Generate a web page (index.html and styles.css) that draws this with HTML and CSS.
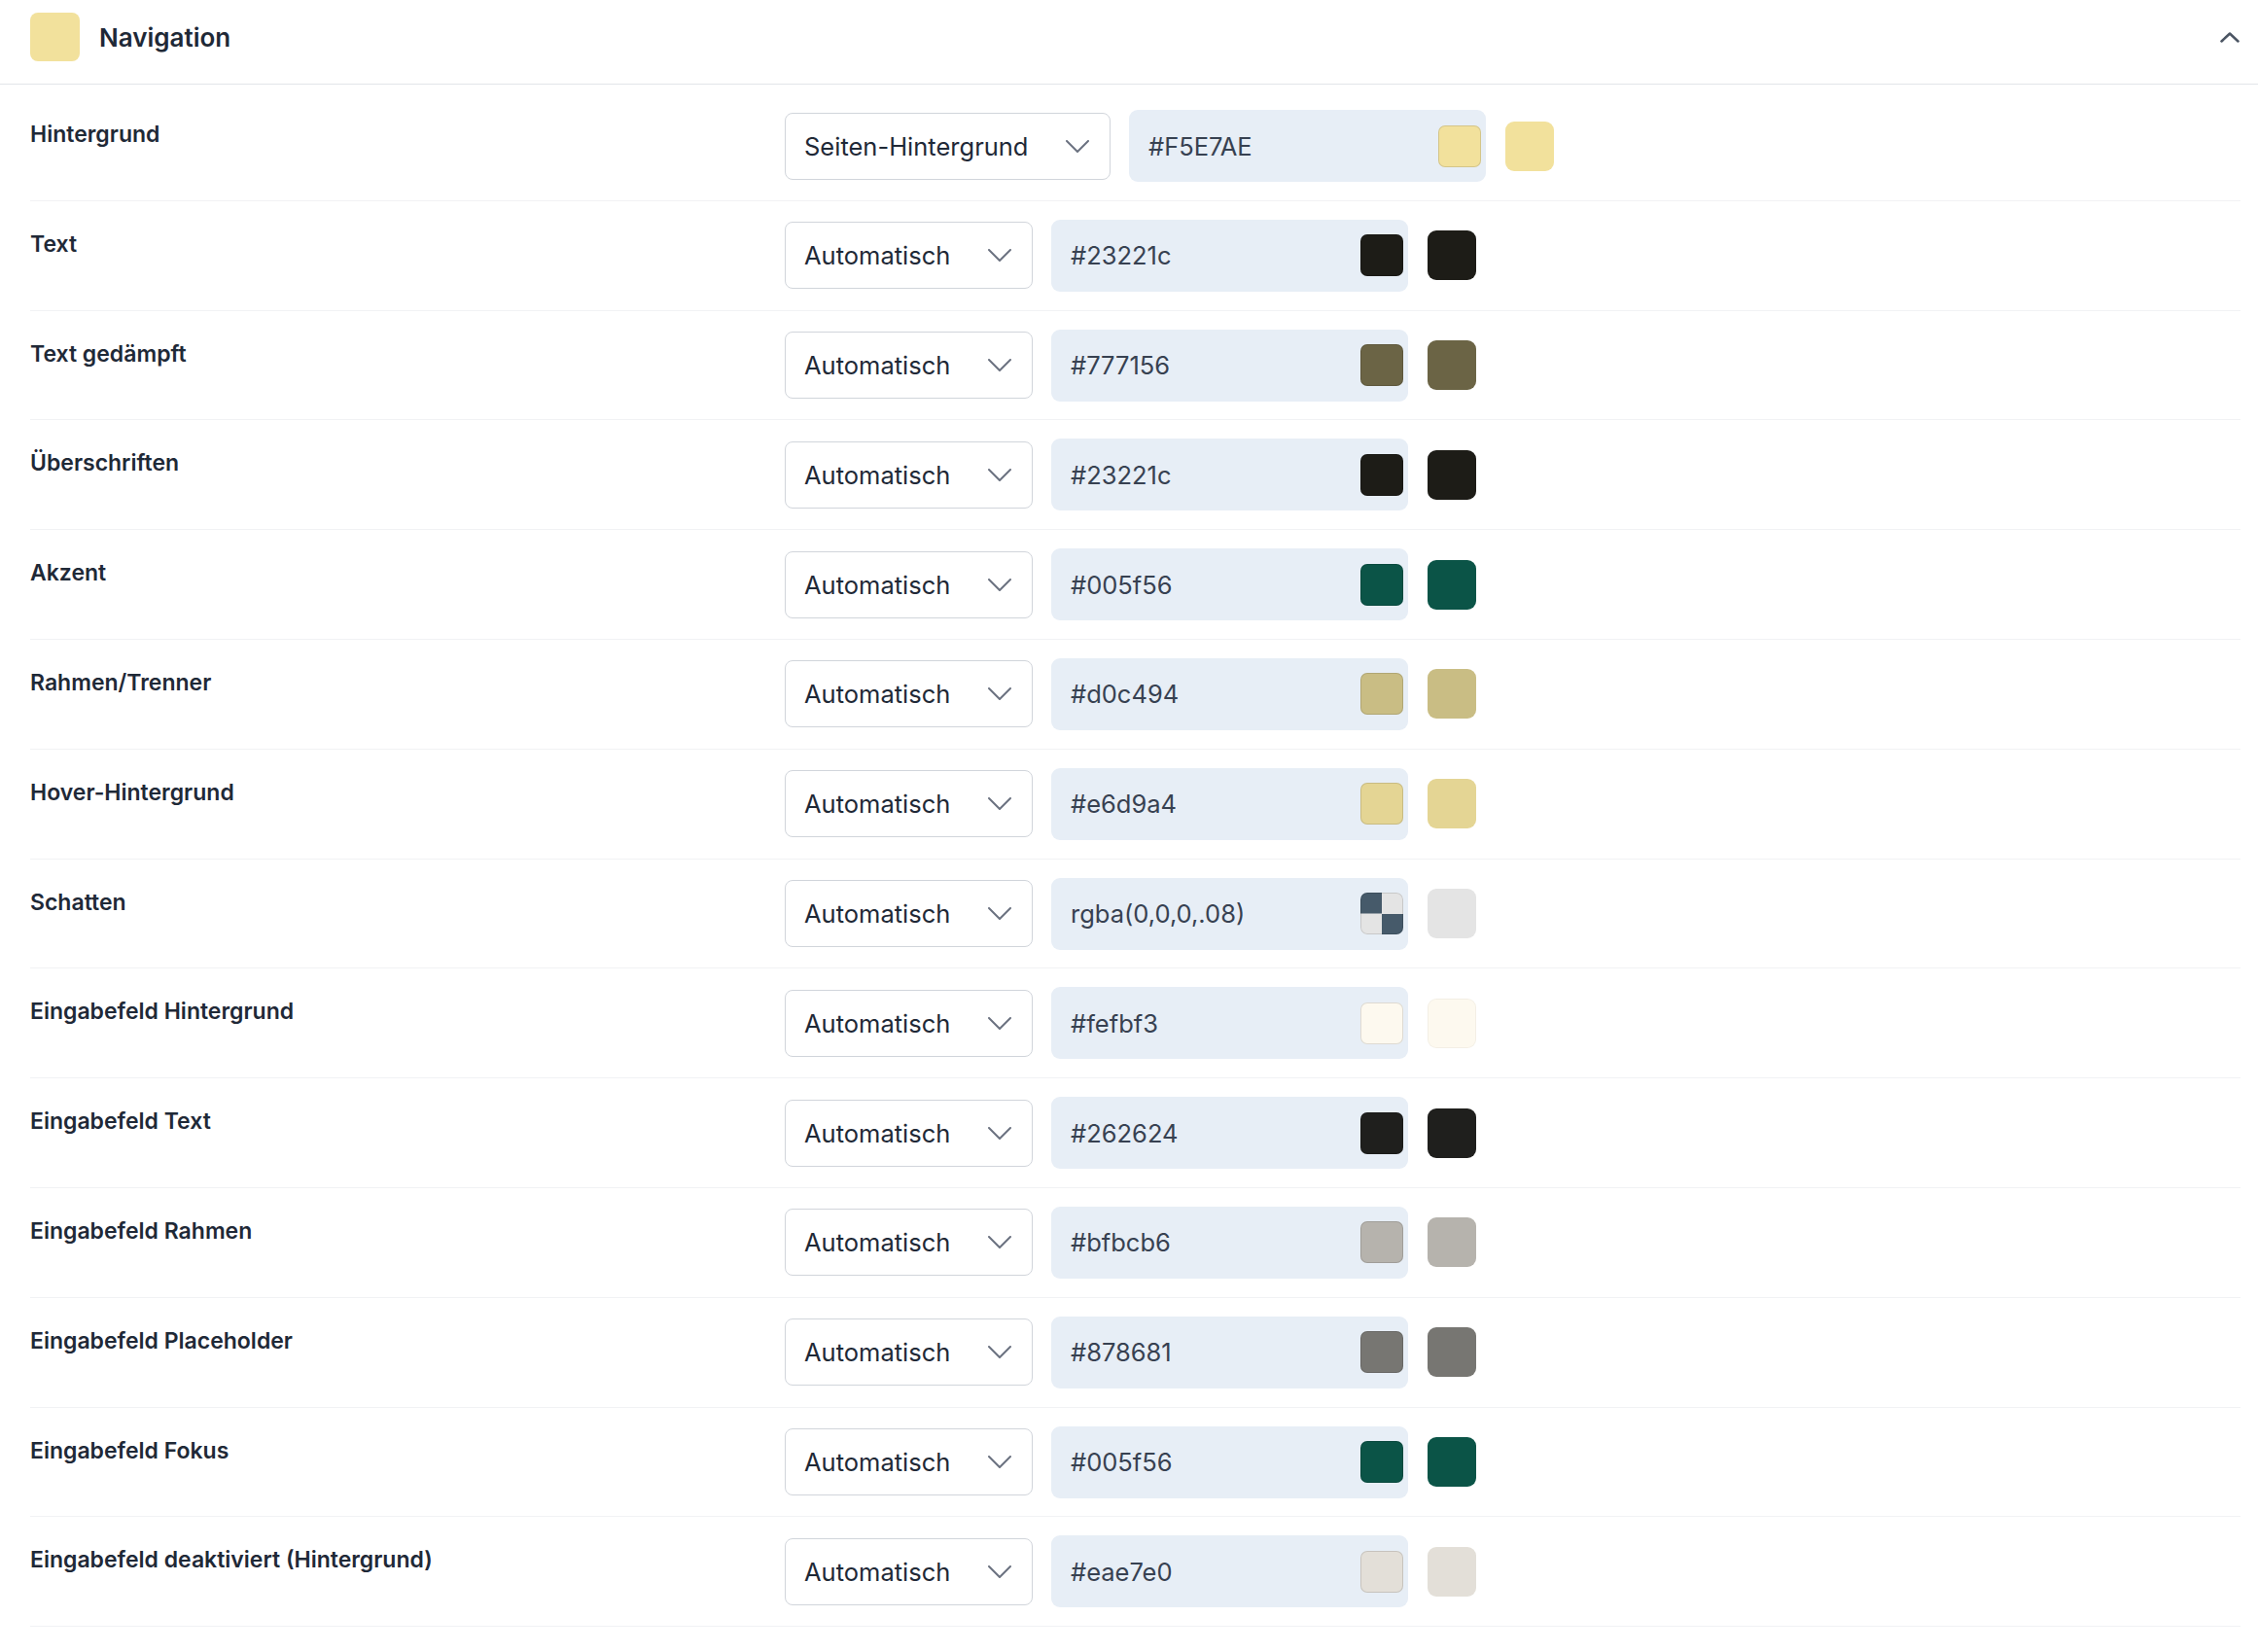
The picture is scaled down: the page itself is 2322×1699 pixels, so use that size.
FILE: index.html
```html
<!DOCTYPE html>
<html lang="de">

<head>
  <meta charset="UTF-8">
  <title>Farben – Navigation</title>
  <link rel="stylesheet" href="styles.css">
</head>

<body>
  <div class="panel">
    <div class="panel-head">
      <span class="head-swatch"></span>
      <h2>Navigation</h2>
      <svg class="toggle" width="20" height="11" viewBox="0 0 20 11">
        <path d="M1.5 9.5L10 1.5l8.5 8" />
      </svg>
    </div>

    <div class="rows">
      <div class="row">
        <div class="row-label">Hintergrund</div>
        <div class="row-controls">
          <div class="select wide">Seiten-Hintergrund
            <svg width="24" height="13" viewBox="0 0 24 13"><path d="M1 1l11 11 11-11" /></svg>
          </div>
          <div class="hex-field">
            <span>#F5E7AE</span>
            <span class="picker" style="background: #f2e19c"></span>
          </div>
          <span class="swatch" style="background: #f2e19c"></span>
        </div>
      </div>

      <div class="row">
        <div class="row-label">Text</div>
        <div class="row-controls">
          <div class="select">Automatisch
            <svg width="24" height="13" viewBox="0 0 24 13"><path d="M1 1l11 11 11-11" /></svg>
          </div>
          <div class="hex-field">
            <span>#23221c</span>
            <span class="picker" style="background: #1d1c17"></span>
          </div>
          <span class="swatch" style="background: #1d1c17"></span>
        </div>
      </div>

      <div class="row">
        <div class="row-label">Text gedämpft</div>
        <div class="row-controls">
          <div class="select">Automatisch
            <svg width="24" height="13" viewBox="0 0 24 13"><path d="M1 1l11 11 11-11" /></svg>
          </div>
          <div class="hex-field">
            <span>#777156</span>
            <span class="picker" style="background: #6b6445"></span>
          </div>
          <span class="swatch" style="background: #6b6445"></span>
        </div>
      </div>

      <div class="row">
        <div class="row-label">Überschriften</div>
        <div class="row-controls">
          <div class="select">Automatisch
            <svg width="24" height="13" viewBox="0 0 24 13"><path d="M1 1l11 11 11-11" /></svg>
          </div>
          <div class="hex-field">
            <span>#23221c</span>
            <span class="picker" style="background: #1d1c17"></span>
          </div>
          <span class="swatch" style="background: #1d1c17"></span>
        </div>
      </div>

      <div class="row">
        <div class="row-label">Akzent</div>
        <div class="row-controls">
          <div class="select">Automatisch
            <svg width="24" height="13" viewBox="0 0 24 13"><path d="M1 1l11 11 11-11" /></svg>
          </div>
          <div class="hex-field">
            <span>#005f56</span>
            <span class="picker" style="background: #0b5447"></span>
          </div>
          <span class="swatch" style="background: #0b5447"></span>
        </div>
      </div>

      <div class="row">
        <div class="row-label">Rahmen/Trenner</div>
        <div class="row-controls">
          <div class="select">Automatisch
            <svg width="24" height="13" viewBox="0 0 24 13"><path d="M1 1l11 11 11-11" /></svg>
          </div>
          <div class="hex-field">
            <span>#d0c494</span>
            <span class="picker" style="background: #c9bd84"></span>
          </div>
          <span class="swatch" style="background: #c9bd84"></span>
        </div>
      </div>

      <div class="row">
        <div class="row-label">Hover-Hintergrund</div>
        <div class="row-controls">
          <div class="select">Automatisch
            <svg width="24" height="13" viewBox="0 0 24 13"><path d="M1 1l11 11 11-11" /></svg>
          </div>
          <div class="hex-field">
            <span>#e6d9a4</span>
            <span class="picker" style="background: #e4d594"></span>
          </div>
          <span class="swatch" style="background: #e4d594"></span>
        </div>
      </div>

      <div class="row">
        <div class="row-label">Schatten</div>
        <div class="row-controls">
          <div class="select">Automatisch
            <svg width="24" height="13" viewBox="0 0 24 13"><path d="M1 1l11 11 11-11" /></svg>
          </div>
          <div class="hex-field">
            <span>rgba(0,0,0,.08)</span>
            <span class="picker checker"></span>
          </div>
          <span class="swatch" style="background: #e4e4e4"></span>
        </div>
      </div>

      <div class="row">
        <div class="row-label">Eingabefeld Hintergrund</div>
        <div class="row-controls">
          <div class="select">Automatisch
            <svg width="24" height="13" viewBox="0 0 24 13"><path d="M1 1l11 11 11-11" /></svg>
          </div>
          <div class="hex-field">
            <span>#fefbf3</span>
            <span class="picker" style="background: #fdf9ef"></span>
          </div>
          <span class="swatch light" style="background: #fdf9ef"></span>
        </div>
      </div>

      <div class="row">
        <div class="row-label">Eingabefeld Text</div>
        <div class="row-controls">
          <div class="select">Automatisch
            <svg width="24" height="13" viewBox="0 0 24 13"><path d="M1 1l11 11 11-11" /></svg>
          </div>
          <div class="hex-field">
            <span>#262624</span>
            <span class="picker" style="background: #1f1f1d"></span>
          </div>
          <span class="swatch" style="background: #1f1f1d"></span>
        </div>
      </div>

      <div class="row">
        <div class="row-label">Eingabefeld Rahmen</div>
        <div class="row-controls">
          <div class="select">Automatisch
            <svg width="24" height="13" viewBox="0 0 24 13"><path d="M1 1l11 11 11-11" /></svg>
          </div>
          <div class="hex-field">
            <span>#bfbcb6</span>
            <span class="picker" style="background: #b6b3ad"></span>
          </div>
          <span class="swatch" style="background: #b6b3ad"></span>
        </div>
      </div>

      <div class="row">
        <div class="row-label">Eingabefeld Placeholder</div>
        <div class="row-controls">
          <div class="select">Automatisch
            <svg width="24" height="13" viewBox="0 0 24 13"><path d="M1 1l11 11 11-11" /></svg>
          </div>
          <div class="hex-field">
            <span>#878681</span>
            <span class="picker" style="background: #777672"></span>
          </div>
          <span class="swatch" style="background: #777672"></span>
        </div>
      </div>

      <div class="row">
        <div class="row-label">Eingabefeld Fokus</div>
        <div class="row-controls">
          <div class="select">Automatisch
            <svg width="24" height="13" viewBox="0 0 24 13"><path d="M1 1l11 11 11-11" /></svg>
          </div>
          <div class="hex-field">
            <span>#005f56</span>
            <span class="picker" style="background: #0b5447"></span>
          </div>
          <span class="swatch" style="background: #0b5447"></span>
        </div>
      </div>

      <div class="row">
        <div class="row-label">Eingabefeld deaktiviert (Hintergrund)</div>
        <div class="row-controls">
          <div class="select">Automatisch
            <svg width="24" height="13" viewBox="0 0 24 13"><path d="M1 1l11 11 11-11" /></svg>
          </div>
          <div class="hex-field">
            <span>#eae7e0</span>
            <span class="picker" style="background: #e3dfd8"></span>
          </div>
          <span class="swatch" style="background: #e3dfd8"></span>
        </div>
      </div>
    </div>
  </div>
</body>

</html>
```

FILE: styles.css
```css
body {
  font-family: Inter, "Noto Sans", sans-serif;
  background-color: #ffffff;
  color: #1f2937;
  margin: 0;
  padding: 0;
}

.panel {
  background-color: #ffffff;
}

/* header with colour chip, title and collapse arrow */
.panel-head {
  display: flex;
  align-items: center;
  gap: 20px;
  height: 50px;
  padding: 13px 19px 23px 31px;
  border-bottom: 1px solid #e2e5e9;
}

.head-swatch {
  width: 51px;
  height: 50px;
  border-radius: 8px;
  background-color: #f2e19c;
}

.panel-head h2 {
  flex: 1;
  margin: 0;
  font-size: 26px;
  font-weight: 600;
  color: #1f2937;
}

.toggle path {
  fill: none;
  stroke: #4b5563;
  stroke-width: 2.5;
  stroke-linecap: round;
  stroke-linejoin: round;
}

.rows {
  padding: 7px 18px 0 31px;
}

.row {
  display: flex;
  align-items: flex-start;
  padding: 19px 0 18.8px;
  border-bottom: 1px solid #f1f2f4;
}

.row-label {
  flex: 0 0 776px;
  margin-top: 8px;
  font-size: 23px;
  font-weight: 600;
  line-height: 1.5;
  color: #1f2937;
}

.row-controls {
  display: flex;
  align-items: center;
}

.select {
  box-sizing: border-box;
  display: flex;
  align-items: center;
  justify-content: space-between;
  width: 255px;
  height: 69px;
  padding: 0 21px 0 19px;
  border: 1px solid #d1d5db;
  border-radius: 8px;
  font-size: 25.5px;
  color: #1f2937;
  background-color: #ffffff;
}

.select.wide {
  width: 335px;
}

.select svg path {
  fill: none;
  stroke: #6b7280;
  stroke-width: 2;
  stroke-linecap: round;
  stroke-linejoin: round;
}

.hex-field {
  box-sizing: border-box;
  display: flex;
  align-items: center;
  justify-content: space-between;
  width: 367px;
  height: 74px;
  margin-left: 19px;
  padding: 0 5px 0 20px;
  border-radius: 9px;
  background-color: #e7eef6;
  font-size: 25.5px;
  color: #374151;
}

.picker {
  width: 44px;
  height: 43px;
  border-radius: 7px;
  box-shadow: inset 0 0 0 1px rgba(0, 0, 0, 0.12);
}

/* transparent colour shown as a 2x2 checkerboard */
.picker.checker {
  background:
    linear-gradient(#465a6a, #465a6a) 0 0 / 50% 50% no-repeat,
    linear-gradient(#465a6a, #465a6a) 100% 100% / 50% 50% no-repeat,
    #e4e4e4;
}

.swatch {
  width: 50px;
  height: 51px;
  margin-left: 20px;
  border-radius: 9px;
}

.swatch.light {
  box-shadow: inset 0 0 0 1px rgba(0, 0, 0, 0.04);
}
```
